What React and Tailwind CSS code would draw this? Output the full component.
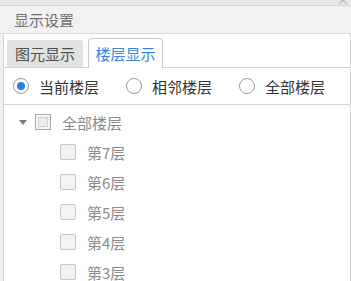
import React from "react";

const floors = ["第7层", "第6层", "第5层", "第4层", "第3层"];

function Radio({ checked, label }) {
  return (
    <label className="flex items-center gap-[10px]">
      <span className="w-4 h-4 shrink-0 rounded-full border border-[#9a9a9a] bg-white grid place-items-center">
        {checked && <span className="w-[8px] h-[8px] rounded-full bg-[#2d7ee6]" />}
      </span>
      <span className="text-[15px] text-[#333]">{label}</span>
    </label>
  );
}

export default function App() {
  return (
    <div className="w-[351px] h-[281px] overflow-hidden bg-[#f1f1f1] flex flex-col font-['Noto_Sans_CJK_SC','Noto_Sans',sans-serif] leading-none">
      {/* title strip, close button cut off */}
      <div className="relative h-[6px] shrink-0 bg-[#e7e7e7] border-b border-[#d6d6d6]">
        <svg className="absolute right-[4px] top-0" width="8" height="5" viewBox="0 0 8 5">
          <path d="M0 -4 L8 4 M8 -4 L0 4" stroke="#b0b0b0" strokeWidth="1.2" fill="none" />
        </svg>
      </div>

      {/* header */}
      <div className="h-[28px] shrink-0 flex items-center pl-[14px] text-[15px] text-[#707070] border-b border-[#dadada]">
        显示设置
      </div>

      {/* panel */}
      <div className="ml-[3px] flex-1 bg-white border-l border-r border-[#d5d5d5] flex flex-col">
        {/* tabs */}
        <div className="h-[34px] shrink-0 flex items-end gap-[5px] pl-[3px] border-b border-[#d2d2d2]">
          <div className="h-[27px] w-[76px] rounded-t-[3px] bg-[#e2e2e2] flex items-center justify-center text-[15px] text-[#505050]">
            图元显示
          </div>
          <div className="h-[30px] w-[75px] -mb-px rounded-t-[4px] bg-white border border-b-0 border-[#c9c9c9] flex items-center justify-center text-[15px] text-[#3d86dd]">
            楼层显示
          </div>
        </div>

        {/* floor mode */}
        <div className="h-[36px] shrink-0 flex items-center gap-[27px] pl-[9px]">
          <Radio checked label="当前楼层" />
          <Radio label="相邻楼层" />
          <Radio label="全部楼层" />
        </div>

        {/* floor tree */}
        <div className="flex-1 border-t border-[#d5d5d5] pt-[2px] text-[15px] text-[#8a8a8a]">
          <div className="h-[30px] flex items-center pl-[15px]">
            <svg width="8" height="5" viewBox="0 0 8 5" className="mr-[8px] shrink-0">
              <path d="M0 0 H8 L4 5 Z" fill="#7a7a7a" />
            </svg>
            <span className="w-[16px] h-[16px] shrink-0 border border-[#a9a9a9] bg-[#f6f6f6] p-[2px] mr-[11px]">
              <span className="block w-full h-full border border-[#d0d0d0] bg-[#ececec]" />
            </span>
            <span>全部楼层</span>
          </div>
          {floors.map((f) => (
            <div key={f} className="h-[30px] flex items-center pl-[56px]">
              <span className="w-[16px] h-[16px] shrink-0 rounded-[2px] border border-[#c6c6c6] bg-[#f3f3f3] mr-[11px]" />
              <span>{f}</span>
            </div>
          ))}
        </div>
      </div>
    </div>
  );
}
